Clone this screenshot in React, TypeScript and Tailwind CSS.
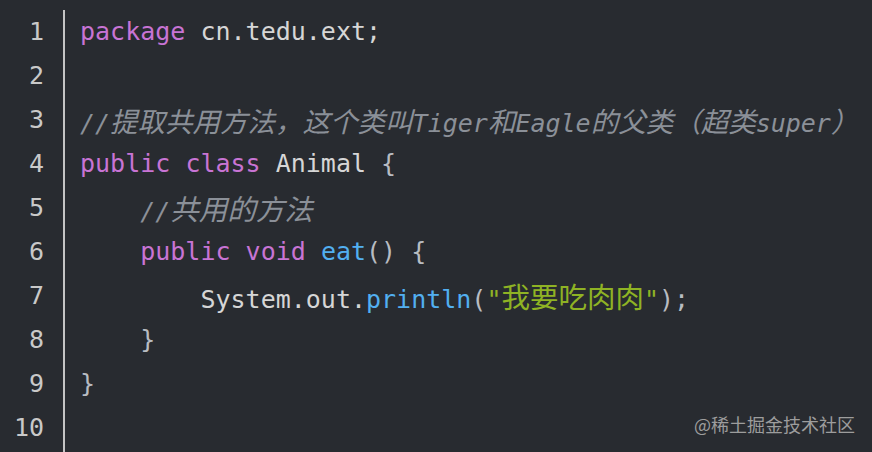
const kw = 'text-[#c874d4]';
const fn = 'text-[#52aff0]';
const str = 'text-[#8fb324]';
const cm = 'italic text-[#8b9098]';
const pl = 'text-[#d6d6d6]';
const br = 'text-[#b8bcc2]';

function Cjk({ children, small }: { children: React.ReactNode; small?: boolean }) {
    return (
        <span className={small ? 'text-[27.5px]' : 'text-[28.5px]'} style={{ fontFamily: '"Noto Sans CJK SC", sans-serif' }}>
            {children}
        </span>
    );
}

const lines: React.ReactNode[] = [
    <>
        <span className={kw}>package</span> <span className={pl}>cn.tedu.ext;</span>
    </>,
    <></>,
    <span className={cm}>
        //<Cjk small>提取共用方法，这个类叫</Cjk>Tiger<Cjk small>和</Cjk>Eagle<Cjk small>的父类（超类</Cjk>super
        <Cjk small>）</Cjk>
    </span>,
    <>
        <span className={kw}>public</span> <span className={kw}>class</span> <span className={pl}>Animal</span>{' '}
        <span className={br}>{'{'}</span>
    </>,
    <span className={cm}>
        {'    '}//<Cjk>共用的方法</Cjk>
    </span>,
    <>
        {'    '}
        <span className={kw}>public</span> <span className={kw}>void</span> <span className={fn}>eat</span>
        <span className={br}>()</span> <span className={br}>{'{'}</span>
    </>,
    <>
        {'        '}
        <span className={pl}>System.out.</span>
        <span className={fn}>println</span>
        <span className={br}>(</span>
        <span className={str}>
            "<Cjk>我要吃肉肉</Cjk>"
        </span>
        <span className={br}>);</span>
    </>,
    <span className={br}>{'    }'}</span>,
    <span className={br}>{'}'}</span>,
    <></>,
];

export default function App() {
    return (
        <div className="relative h-[452px] w-[872px] overflow-hidden bg-[#282b30] pt-[10px]">
            <div className="flex" style={{ fontFamily: '"DejaVu Sans Mono", "Noto Sans CJK SC", monospace' }}>
                <div className="w-[63px] shrink-0 pr-[19px] text-right text-[25px] text-[#c9c9c9]">
                    {lines.map((_, i) => (
                        <div key={i} className="h-[44px] leading-[44px]">
                            {i + 1}
                        </div>
                    ))}
                </div>
                <div className="h-[442px] min-w-0 flex-1 border-l-2 border-[#c4c4c4] pl-[15px] text-[25px]">
                    {lines.map((l, i) => (
                        <div key={i} className="h-[44px] whitespace-pre leading-[44px]">
                            {l}
                        </div>
                    ))}
                </div>
            </div>
            <div
                className="absolute right-[17px] bottom-[14px] text-[18px] text-[#9d9d9d]"
                style={{ fontFamily: '"Noto Sans CJK SC", sans-serif' }}
            >
                @稀土掘金技术社区
            </div>
        </div>
    );
}
